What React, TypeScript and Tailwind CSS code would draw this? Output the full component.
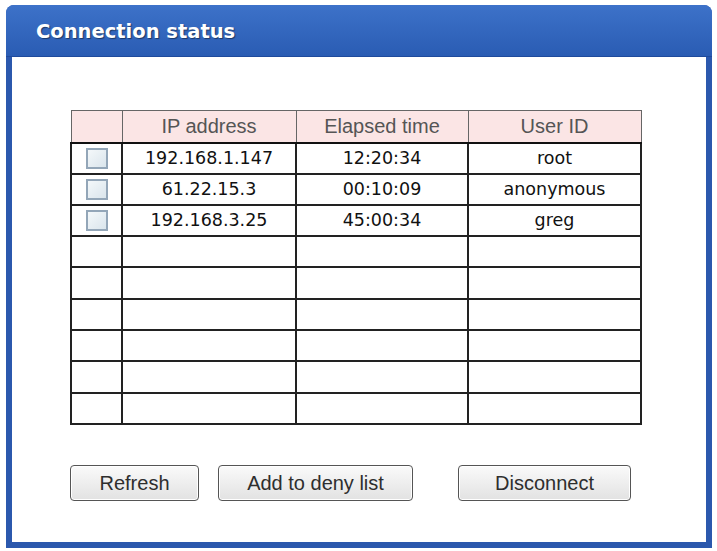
import React from "react";

const rows = [
  { ip: "192.168.1.147", time: "12:20:34", user: "root" },
  { ip: "61.22.15.3", time: "00:10:09", user: "anonymous" },
  { ip: "192.168.3.25", time: "45:00:34", user: "greg" },
];

const emptyRows = 6;

function Box() {
  return (
    <span className="inline-block w-[22px] h-[21px] border-2 border-[#93a6b8] bg-gradient-to-br from-[#f4f8fa] to-[#dae5ec] align-middle" />
  );
}

function Button({ label, className }: { label: string; className?: string }) {
  return (
    <button
      className={`h-[36px] rounded-[4px] border border-[#555] bg-gradient-to-b from-[#fafafa] to-[#e2e2e2] text-[20px] text-[#2e2e2e] shadow-[inset_0_0_0_1px_#fff] ${className ?? ""}`}
      style={{ fontFamily: '"Liberation Sans", Arial, sans-serif' }}
    >
      {label}
    </button>
  );
}

export default function App() {
  const cell = "border-x-2 border-b-2 border-[#222] p-0 text-center";

  return (
    <div className="w-[717px] h-[551px] bg-white pt-[5px] pl-[6px]">
      <div className="w-[706px] h-[543px] flex flex-col rounded-t-[8px] bg-[#2b58ad] px-[6px] pb-[6px]">
        {/* Title bar */}
        <div className="h-[52px] -mx-[6px] rounded-t-[8px] bg-gradient-to-b from-[#3d72c9] to-[#2a5cb3] flex items-center pl-[30px] pt-[3px] border-b border-[#1f4a9c]">
          <span
            className="text-white text-[19.5px] font-bold [text-shadow:1px_1px_1px_rgba(0,0,0,0.45)]"
            style={{ fontFamily: '"DejaVu Sans", Verdana, sans-serif' }}
          >
            Connection status
          </span>
        </div>

        {/* Body */}
        <div className="flex-1 bg-white pt-[53px] pl-[58px]">
          <table
            className="border-collapse table-fixed w-[570px]"
            style={{ fontFamily: '"DejaVu Sans", Tahoma, sans-serif' }}
          >
            <colgroup>
              <col className="w-[51px]" />
              <col className="w-[174px]" />
              <col className="w-[172px]" />
              <col className="w-[173px]" />
            </colgroup>
            <thead>
              <tr className="bg-[#fbe5e5] h-[32px]">
                <th className="border border-[#666] border-b-2 border-b-[#111] p-0" />
                {["IP address", "Elapsed time", "User ID"].map((h) => (
                  <th
                    key={h}
                    className="border border-[#666] border-b-2 border-b-[#111] p-0 font-normal text-[20px] text-[#555]"
                    style={{ fontFamily: '"Liberation Sans", Arial, sans-serif' }}
                  >
                    {h}
                  </th>
                ))}
              </tr>
            </thead>
            <tbody className="text-[17.5px] text-[#111]">
              {rows.map((r) => (
                <tr key={r.ip} className="h-[31px]">
                  <td className={cell}>
                    <Box />
                  </td>
                  <td className={cell}>{r.ip}</td>
                  <td className={cell}>{r.time}</td>
                  <td className={cell}>{r.user}</td>
                </tr>
              ))}
              {Array.from({ length: emptyRows }).map((_, i) => (
                <tr key={i} className={i % 3 === 1 ? "h-[32px]" : "h-[31px]"}>
                  <td className={cell} />
                  <td className={cell} />
                  <td className={cell} />
                  <td className={cell} />
                </tr>
              ))}
            </tbody>
          </table>

          <div className="flex mt-[40px]">
            <Button label="Refresh" className="w-[129px]" />
            <Button label="Add to deny list" className="w-[195px] ml-[19px]" />
            <Button label="Disconnect" className="w-[173px] ml-[45px]" />
          </div>
        </div>
      </div>
    </div>
  );
}
